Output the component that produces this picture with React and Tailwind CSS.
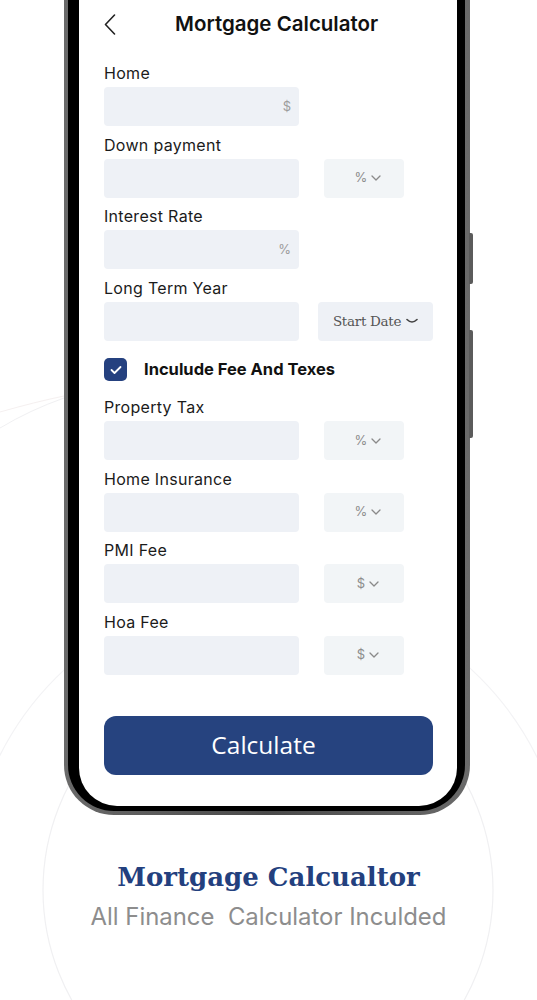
import React from "react";

const Chevron = ({ className = "" }) => (
  <svg width="10" height="6" viewBox="0 0 10 6" className={className} fill="none">
    <path d="M1 1 L5 5 L9 1" stroke="#8a8a8a" strokeWidth="1.3" strokeLinecap="round" strokeLinejoin="round" />
  </svg>
);

const Row = ({ label, suffix, side }) => (
  <div className="flex flex-col">
    <div className="h-[22px] text-[16px] leading-[22px] tracking-[0.3px] text-[#1b1b1b]">{label}</div>
    <div className="mt-[3px] flex h-[39px] items-center">
      <div className="flex h-[39px] w-[195px] items-center justify-end rounded-[4px] bg-[#eef1f6] pr-[8px] text-[13px] text-[#9c9c9c]">
        {suffix}
      </div>
      {side === "start" ? (
        <div className="ml-[19px] flex h-[39px] w-[115px] items-center justify-center gap-[5px] rounded-[4px] bg-[#eef1f6] text-[13.5px] text-[#555] [font-family:'DejaVu_Serif','Liberation_Serif',serif]">
          <span className="tracking-[-0.3px]">Start Date</span>
          <svg width="12" height="6" viewBox="0 0 12 6" fill="none">
            <path d="M1 1.5 Q6 6.5 11 1.5" stroke="#444" strokeWidth="1.6" strokeLinecap="round" />
          </svg>
        </div>
      ) : side ? (
        <div className="ml-[25px] flex h-[39px] w-[80px] items-center justify-center gap-[4px] rounded-[4px] bg-[#f2f5f7] pl-[8px] text-[13px] text-[#8c8c8c]">
          <span>{side}</span>
          <Chevron />
        </div>
      ) : null}
    </div>
  </div>
);

export default function App() {
  return (
    <div className="relative h-[1000px] w-[537px] overflow-hidden bg-white [font-family:Inter,'Noto_Sans',sans-serif]">
      <svg className="pointer-events-none absolute inset-0" width="537" height="1000" viewBox="0 0 537 1000" fill="none">
        <circle cx="268" cy="890" r="225" stroke="#f0f0f2" strokeWidth="1.2" />
        <circle cx="268" cy="890" r="300" stroke="#f3f3f5" strokeWidth="1.2" />
        <path d="M0 428 Q30 410 64 398" stroke="#f0f0f2" strokeWidth="1" />
        <path d="M0 412 Q35 402 64 396" stroke="#f5f0f0" strokeWidth="1" />
      </svg>

      <div className="relative ml-[64px] w-[406px]">
        <div className="absolute right-[-3px] top-[233px] h-[51px] w-[4px] rounded-r-[2px] bg-[#5b5b5b]" />
        <div className="absolute right-[-3px] top-[330px] h-[108px] w-[4px] rounded-r-[2px] bg-[#5b5b5b]" />
        <div className="rounded-b-[50px] bg-gradient-to-r from-[#6a6a6a] via-[#4a4a4a] to-[#6a6a6a] pb-[4px] pl-[4px] pr-[5px]">
          <div className="rounded-b-[46px] bg-black pb-[5px] pl-[11px] pr-[8px]">
            <div className="flex h-[806px] flex-col rounded-b-[38px] bg-white pl-[25px] pr-[24px]">
              <div className="flex h-[50px] items-center pb-[2px]">
                <svg width="12" height="21" viewBox="0 0 12 21" fill="none">
                  <path d="M10.5 1 L1.5 10.5 L10.5 20" stroke="#222" strokeWidth="1.6" strokeLinecap="round" strokeLinejoin="round" />
                </svg>
                <div className="ml-[59px] text-[20.5px] font-semibold tracking-[0px] text-[#111]">Mortgage Calculator</div>
              </div>
              <div className="mt-[12px] flex flex-col gap-[7.5px]">
                <Row label="Home" suffix="$" />
                <Row label="Down payment" side="%" />
                <Row label="Interest Rate" suffix="%" />
                <Row label="Long Term Year" side="start" />
              </div>
              <div className="mt-[17.5px] flex h-[23px] items-center">
                <div className="flex h-[23px] w-[23px] items-center justify-center rounded-[5px] bg-[#25417f]">
                  <svg width="12" height="10" viewBox="0 0 12 10" fill="none">
                    <path d="M1.5 5 L4.5 8 L10.5 2" stroke="white" strokeWidth="1.8" strokeLinecap="round" strokeLinejoin="round" />
                  </svg>
                </div>
                <div className="ml-[17px] text-[16.5px] font-bold text-[#111]">Inculude Fee And Texes</div>
              </div>
              <div className="mt-[15px] flex flex-col gap-[7.5px]">
                <Row label="Property Tax" side="%" />
                <Row label="Home Insurance" side="%" />
                <Row label="PMI Fee" side="$" />
                <Row label="Hoa Fee" side="$" />
              </div>
              <button className="mt-[41.5px] flex h-[59px] w-full items-center justify-center rounded-[12px] bg-[#26437f] pr-[10px] text-[24.5px] font-medium text-white [font-family:'Open_Sans','Noto_Sans',sans-serif]">
                Calculate
              </button>
            </div>
          </div>
        </div>
      </div>

      <div className="relative mt-[44px] text-center">
        <div className="h-[36px] text-[26px] font-bold leading-[36px] text-[#23407e] [font-family:'DejaVu_Serif','Liberation_Serif',serif]">
          Mortgage Calcualtor
        </div>
        <div className="mt-[8px] h-[28px] whitespace-pre text-[23.9px] leading-[28px] text-[#8d8d8d]">
          {"All Finance  Calculator Inculded"}
        </div>
      </div>
    </div>
  );
}
